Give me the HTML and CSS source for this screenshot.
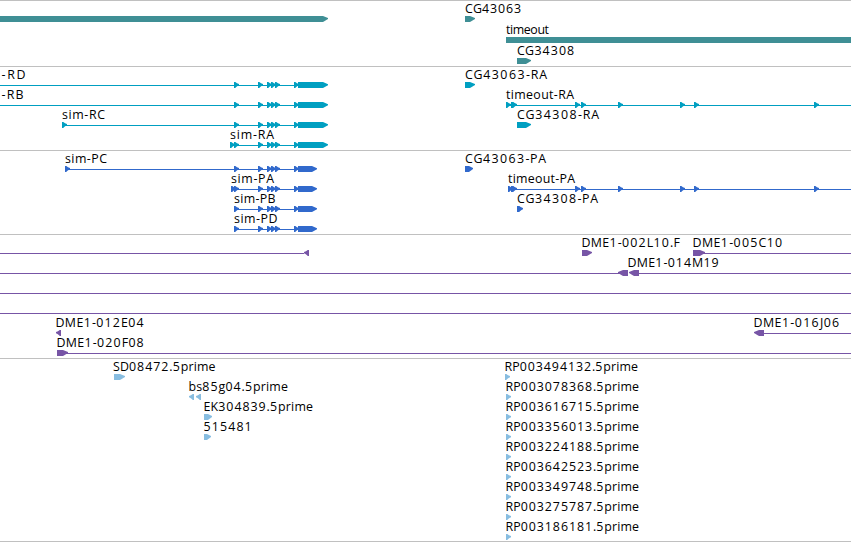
FILE: index.html
```html
<!DOCTYPE html>
<html lang="en">
<head>
<meta charset="utf-8">
<title>Genome browser</title>
<link rel="stylesheet" href="styles.css">
</head>
<body>
<svg class="defs" aria-hidden="true">
  <defs>
    <path id="r" d="M0 0h1.3L3 1.2 5 2v1.2L3.5 4 2.2 5 1.2 6H0z"/>
    <path id="l" d="M6 0H4.7L3 1.2 1 2v1.2L2.5 4 3.8 5 4.8 6H6z"/>
    <path id="box-r" d="M0 0h6l5 2v1L6 6H0z"/>
    <path id="box-l" d="M11 0H6L1 2v1l5 3h5z"/>
    <g id="exons">
      <use href="#r" x="234"/><use href="#r" x="258"/><use href="#r" x="267"/><use href="#r" x="271"/><use href="#r" x="275"/><use href="#r" x="294"/>
    </g>
    <g id="rna"><use href="#exons"/><path d="M298 0h25l5 2.2v1L323 6h-25z"/></g>
    <g id="protein"><use href="#exons"/><path d="M298 0h14l5 2.2v1L312 6h-14z"/></g>
    <g id="timeout-exons">
      <use href="#r" x="575"/><use href="#r" x="581"/><use href="#r" x="618"/><use href="#r" x="680"/><use href="#r" x="694"/><use href="#r" x="814"/>
    </g>
  </defs>
</svg>
<main class="tracks">
  <section class="track genes">
    <svg width="851" height="65" viewBox="0 1 851 65">
      <path d="M0 16h323l5 2v1L323 22H0z"/>
      <text x="465" y="13" textLength="57">CG<tspan>43063</tspan></text>
      <path d="M465 16h5l5 2v1L470 22h-5z"/>
      <text x="506" y="34" textLength="43">timeout</text>
      <path d="M506 37h345v6H506z"/>
      <text x="517" y="55" textLength="58">CG<tspan>34308</tspan></text>
      <path d="M517 58h9l5 2v1L526 64h-9z"/>
    </svg>
  </section>
  <section class="track transcripts">
    <svg width="851" height="83" viewBox="0 67 851 83">
      <text x="1.5" y="79" textLength="24">-RD</text>
      <path d="M0 85h298v1H0z"/><use href="#rna" y="82"/>
      <text x="1.5" y="99" textLength="22">-RB</text>
      <path d="M0 105h298v1H0z"/><use href="#rna" y="102"/>
      <text x="62" y="119" textLength="43">sim-RC</text>
      <path d="M62 125h236v1H62z"/><use href="#r" x="62" y="122"/><use href="#rna" y="122"/>
      <text x="230" y="139" textLength="44">sim-RA</text>
      <path d="M230 145h68v1h-68z"/><use href="#r" x="230" y="142"/><use href="#rna" y="142"/>
      <text x="465" y="79" textLength="82">CG<tspan>43063</tspan>-RA</text>
      <path d="M465 82h5l5 2v1L470 88h-5z"/>
      <text x="506" y="99" textLength="68">timeout-RA</text>
      <path d="M506 105h345v1H506z"/><use href="#r" x="506" y="102"/><use href="#r" x="511" y="102"/><use href="#r" x="512" y="102"/><use href="#timeout-exons" y="102"/>
      <text x="517" y="119" textLength="82">CG<tspan>34308</tspan>-RA</text>
      <path d="M517 122h9l5 2v1L526 128h-9z"/>
    </svg>
  </section>
  <section class="track proteins">
    <svg width="851" height="83" viewBox="0 151 851 83">
      <text x="65" y="163" textLength="42">sim-PC</text>
      <path d="M65 169h233v1H65z"/><use href="#r" x="65" y="166"/><use href="#protein" y="166"/>
      <text x="231" y="183" textLength="43">sim-PA</text>
      <path d="M231 189h67v1h-67z"/><use href="#r" x="231" y="186"/><use href="#protein" y="186"/>
      <text x="234" y="203" textLength="41.5">sim-PB</text>
      <path d="M234 209h64v1h-64z"/><use href="#protein" y="206"/>
      <text x="234" y="223" textLength="43.5">sim-PD</text>
      <path d="M234 229h64v1h-64z"/><use href="#protein" y="226"/>
      <text x="465" y="163" textLength="81">CG<tspan>43063</tspan>-PA</text>
      <path d="M465 166h4l4 2v1L469 172h-4z"/>
      <text x="508" y="183" textLength="67">timeout-PA</text>
      <path d="M508 189h343v1H508z"/><use href="#r" x="508" y="186"/><use href="#r" x="511" y="186"/><use href="#r" x="512" y="186"/><use href="#timeout-exons" y="186"/>
      <text x="517" y="203" textLength="81">CG<tspan>34308</tspan>-PA</text>
      <use href="#r" x="517" y="206"/><use href="#r" x="518" y="206"/>
    </svg>
  </section>
  <section class="track clones">
    <svg width="851" height="123" viewBox="0 235 851 123">
      <path d="M0 253h304v1H0z"/><use href="#l" x="303" y="250"/>
      <text x="581.5" y="247" textLength="98.5">DME<tspan>1</tspan>-<tspan>002</tspan>L<tspan>10</tspan>.F</text>
      <path d="M582 250h5l5 2v1L587 256h-5z"/>
      <text x="692.5" y="247" textLength="90.5">DME<tspan>1</tspan>-<tspan>005</tspan>C<tspan>10</tspan></text>
      <path d="M693 253h158v1H693z"/><path d="M693 250h7l5 2v1L700 256h-7z"/>
      <text x="627.5" y="267" textLength="92">DME<tspan>1</tspan>-<tspan>014</tspan>M<tspan>19</tspan></text>
      <path d="M0 273h620v1H0zM638 273h213v1H638z"/><use href="#box-l" x="617" y="270"/><use href="#box-l" x="628" y="270"/>
      <path d="M0 293h851v1H0zM0 313h851v1H0z"/>
      <text x="55.5" y="327" textLength="89">DME<tspan>1</tspan>-<tspan>012</tspan>E<tspan>04</tspan></text>
      <use href="#l" x="55" y="330"/>
      <text x="56.5" y="347" textLength="88">DME<tspan>1</tspan>-<tspan>020</tspan>F<tspan>08</tspan></text>
      <path d="M57 353h794v1H57z"/><use href="#box-r" x="57" y="350"/>
      <text x="753.5" y="327" textLength="86.5">DME<tspan>1</tspan>-<tspan>016</tspan>J<tspan>06</tspan></text>
      <path d="M763 333h88v1h-88z"/><use href="#box-l" x="753" y="330"/>
    </svg>
  </section>
  <section class="track ests">
    <svg width="851" height="182" viewBox="0 359 851 182">
      <text x="113" y="371" textLength="102.5">SD<tspan>08472</tspan>.<tspan>5</tspan>prime</text>
      <use href="#box-r" x="114" y="374"/>
      <text x="188.5" y="391" textLength="99.5">bs<tspan>85</tspan>g<tspan>04</tspan>.<tspan>5</tspan>prime</text>
      <use href="#l" x="188" y="394"/><use href="#l" x="195" y="394"/>
      <text x="203.5" y="411" textLength="109.5">EK<tspan>304839</tspan>.<tspan>5</tspan>prime</text>
      <path d="M204 414h4l4 2v1L208 420h-4z"/>
      <text x="203.5" y="431" textLength="49"><tspan>515481</tspan></text>
      <path d="M204 434h3l4 2v1L207 440h-3z"/>
      <text x="504.5" y="371" textLength="133.5">RP<tspan>003494132</tspan>.<tspan>5</tspan>prime</text>
      <use href="#r" x="505" y="374"/>
      <text x="505.5" y="391" textLength="133.5">RP<tspan>003078368</tspan>.<tspan>5</tspan>prime</text>
      <use href="#r" x="506" y="394"/>
      <text x="505.5" y="411" textLength="133.5">RP<tspan>003616715</tspan>.<tspan>5</tspan>prime</text>
      <use href="#r" x="506" y="414"/>
      <text x="505.5" y="431" textLength="133.5">RP<tspan>003356013</tspan>.<tspan>5</tspan>prime</text>
      <use href="#r" x="506" y="434"/>
      <text x="505.5" y="451" textLength="133.5">RP<tspan>003224188</tspan>.<tspan>5</tspan>prime</text>
      <use href="#r" x="506" y="454"/>
      <text x="505.5" y="471" textLength="133.5">RP<tspan>003642523</tspan>.<tspan>5</tspan>prime</text>
      <use href="#r" x="506" y="474"/>
      <text x="505.5" y="491" textLength="133.5">RP<tspan>003349748</tspan>.<tspan>5</tspan>prime</text>
      <use href="#r" x="506" y="494"/>
      <text x="505.5" y="511" textLength="133.5">RP<tspan>003275787</tspan>.<tspan>5</tspan>prime</text>
      <use href="#r" x="506" y="514"/>
      <text x="505.5" y="531" textLength="133.5">RP<tspan>003186181</tspan>.<tspan>5</tspan>prime</text>
      <use href="#r" x="506" y="534"/>
    </svg>
  </section>
</main>
</body>
</html>
```
FILE: styles.css
```css
body {
  margin: 0;
  background: #fff;
  overflow: hidden;
}

.defs {
  display: none;
}

.tracks {
  width: 851px;
  border-bottom: 1px solid #c0c0c0;
}

.track {
  border-top: 1px solid #c0c0c0;
}

.track svg {
  display: block;
}

.genes { fill: #3f8f95; }
.transcripts { fill: #009fc1; }
.proteins { fill: #3169cc; }
.clones { fill: #7755a6; }
.ests { fill: #88bde0; }

text {
  font: 12.4px "Open Sans", "Noto Sans", sans-serif;
  fill: #000;
}

tspan {
  letter-spacing: 0.8px;
}
```
